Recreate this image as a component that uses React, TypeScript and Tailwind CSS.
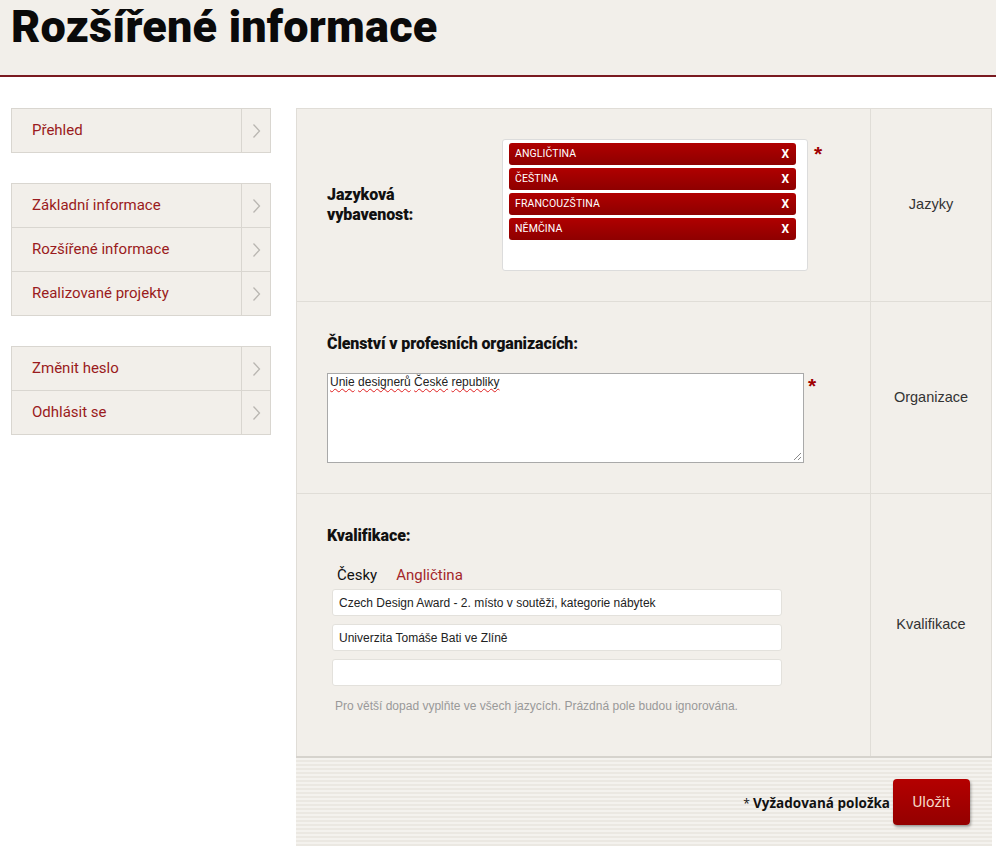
import React from "react"

const beige = "bg-[#f2efea]"

function Chevron() {
  return (
    <svg width="9" height="16" viewBox="0 0 9 16" fill="none">
      <polyline points="1.5,1.5 7.5,8 1.5,14.5" stroke="#b9b6b1" strokeWidth="1.3" />
    </svg>
  )
}

function NavGroup({ items }: { items: string[] }) {
  return (
    <div className={`border border-[#d9d6d0] ${beige}`}>
      {items.map((label, i) => (
        <div key={label} className={`flex items-stretch ${i > 0 ? "h-[44px] border-t border-[#d9d6d0]" : "h-[43px]"}`}>
          <div className="flex flex-1 items-center pl-[20px] text-[15px] text-[#9a1b20] font-['Roboto',sans-serif]">{label}</div>
          <div className="flex w-[29px] items-center justify-center border-l border-[#d9d6d0]">
            <Chevron />
          </div>
        </div>
      ))}
    </div>
  )
}

function Tag({ label }: { label: string }) {
  return (
    <div className="flex h-[22px] items-center justify-between rounded-[3px] bg-gradient-to-b from-[#b00000] to-[#8e0000] pl-[6px] pr-[7px] text-white">
      <span className="text-[10.5px] uppercase tracking-[0.1px] font-['Roboto',sans-serif]">{label}</span>
      <span className="text-[12px] font-bold font-['Roboto',sans-serif]">X</span>
    </div>
  )
}

function Asterisk() {
  return <span className="text-[21px] font-bold leading-none text-[#a00000] font-['Liberation_Sans',sans-serif]">*</span>
}

function RowLabel({ children }: { children: React.ReactNode }) {
  return <div className="text-[16px] font-black leading-[20px] text-[#111] font-['Roboto',sans-serif] tracking-[-0.1px]">{children}</div>
}

function Row({ side, children, last }: { side: string; children: React.ReactNode; last?: boolean }) {
  return (
    <div className={`flex ${last ? "" : "border-b border-[#e0ddd7]"}`}>
      <div className="flex-1">{children}</div>
      <div className="flex w-[121px] items-center justify-center border-l border-[#e0ddd7] text-[14.5px] text-[#333] font-['Liberation_Sans',sans-serif]">
        {side}
      </div>
    </div>
  )
}

const words = ["Unie", "designerů", "České", "republiky"]

export default function App() {
  return (
    <div className="min-h-[852px] bg-white">
      <header className={`h-[77px] border-b-2 border-[#7a1a20] ${beige}`}>
        <h1 className="pl-[11px] pt-[4px] text-[45px] font-black leading-[46px] tracking-[0.2px] text-[#0a0a0a] font-['Roboto',sans-serif]">
          Rozšířené informace
        </h1>
      </header>

      <div className="flex gap-[25px] pl-[11px] pt-[31px]">
        <nav className="flex w-[260px] flex-col gap-[30px]">
          <NavGroup items={["Přehled"]} />
          <NavGroup items={["Základní informace", "Rozšířené informace", "Realizované projekty"]} />
          <NavGroup items={["Změnit heslo", "Odhlásit se"]} />
        </nav>

        <main className="w-[696px]">
          <div className={`border border-b-0 border-[#e0ddd7] ${beige}`}>
            <Row side="Jazyky">
              <div className="flex h-[192px] items-center pl-[30px]">
                <div className="w-[175px]">
                  <RowLabel>
                    Jazyková
                    <br />
                    vybavenost:
                  </RowLabel>
                </div>
                <div className="h-[132px] w-[306px] rounded-[3px] border border-[#dcdcdc] bg-white pl-[6px] pr-[11px] pt-[3px]">
                  <div className="flex flex-col gap-[3px]">
                    {["Angličtina", "Čeština", "Francouzština", "Němčina"].map(l => (
                      <Tag key={l} label={l} />
                    ))}
                  </div>
                </div>
                <div className="ml-[6px] self-start mt-[34px]">
                  <Asterisk />
                </div>
              </div>
            </Row>

            <Row side="Organizace">
              <div className="h-[191px] pl-[30px] pt-[32px]">
                <RowLabel>Členství v profesních organizacích:</RowLabel>
                <div className="mt-[19px] flex items-start">
                  <div className="relative h-[90px] w-[477px] border border-[#a9a9a9] bg-white px-[2px] pt-[1px] text-[12px] leading-[15px] text-[#222] font-['Liberation_Sans',sans-serif]">
                    {words.map((w, i) => (
                      <React.Fragment key={w}>
                        {i > 0 && " "}
                        <span className="underline decoration-wavy decoration-[#e02020] decoration-1 underline-offset-2">{w}</span>
                      </React.Fragment>
                    ))}
                    <svg className="absolute bottom-[1px] right-[1px]" width="10" height="10" viewBox="0 0 10 10">
                      <line x1="9" y1="2" x2="2" y2="9" stroke="#8a8a8a" strokeWidth="1" />
                      <line x1="9" y1="6" x2="6" y2="9" stroke="#8a8a8a" strokeWidth="1" />
                    </svg>
                  </div>
                  <div className="ml-[4px] mt-[2px]">
                    <Asterisk />
                  </div>
                </div>
              </div>
            </Row>

            <Row side="Kvalifikace" last>
              <div className="h-[262px] pl-[30px] pt-[32px]">
                <RowLabel>Kvalifikace:</RowLabel>
                <div className="mt-[20px] flex gap-[19px] pl-[10px] text-[15px] leading-[18px] font-['Roboto',sans-serif]">
                  <span className="text-[#111]">Česky</span>
                  <span className="text-[#a3262b]">Angličtina</span>
                </div>
                <div className="mt-[5px] flex w-[450px] flex-col gap-[8px] pl-[5px]">
                  {["Czech Design Award - 2. místo v soutěži, kategorie nábytek", "Univerzita Tomáše Bati ve Zlíně", ""].map((v, i) => (
                    <input
                      key={i}
                      readOnly
                      defaultValue={v}
                      className="h-[27px] w-[450px] rounded-[3px] border border-[#e3e1dc] bg-white px-[6px] text-[12px] text-[#222] outline-none font-['Liberation_Sans',sans-serif]"
                    />
                  ))}
                </div>
                <p className="mt-[11px] pl-[8px] text-[12px] text-[#999] font-['Liberation_Sans',sans-serif]">
                  Pro větší dopad vyplňte ve všech jazycích. Prázdná pole budou ignorována.
                </p>
              </div>
            </Row>
          </div>

          <div className="flex h-[90px] items-start justify-end border-t-2 border-[#d6d3cd] bg-[repeating-linear-gradient(180deg,#f4f2ee_0px,#f4f2ee_2px,#ebe8e2_2px,#ebe8e2_4px)] pr-[22px] pt-[21px]">
            <div className="mt-[14px] mr-[3px] text-[13.5px] font-bold text-[#111] font-['Open_Sans',sans-serif]">
              <span className="font-normal text-[12px]">* </span>Vyžadovaná položka
            </div>
            <button className="h-[46px] w-[77px] rounded-[4px] bg-gradient-to-b from-[#b40000] to-[#940000] text-[15px] text-[#f6d6c6] shadow-[1px_2px_3px_rgba(0,0,0,0.35)] font-['Roboto',sans-serif]">
              Uložit
            </button>
          </div>
        </main>
      </div>
    </div>
  )
}
